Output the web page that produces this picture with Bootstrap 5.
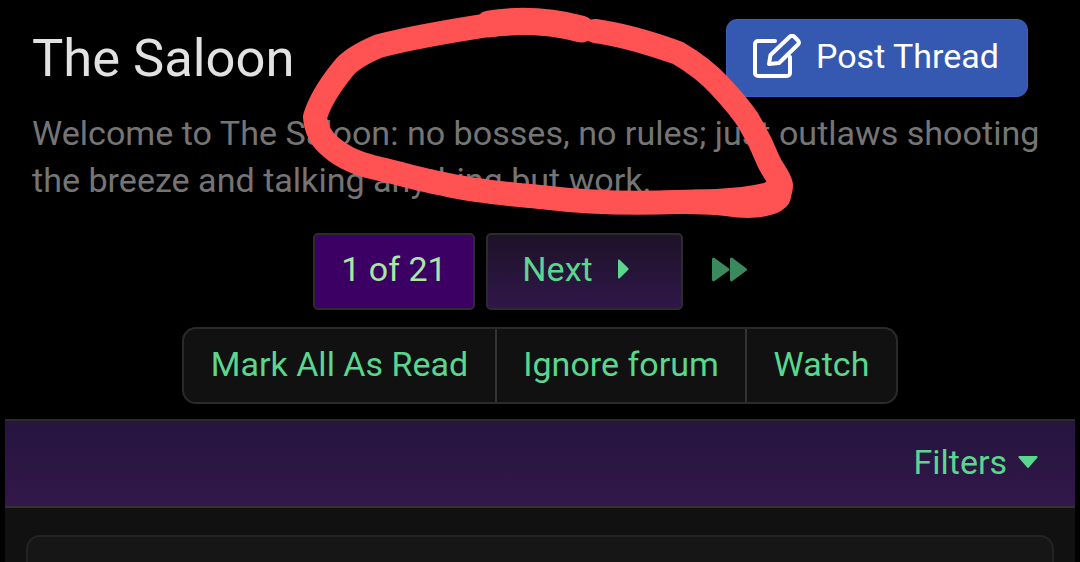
<!DOCTYPE html>
<html lang="en">
<head>
<meta charset="utf-8">
<title>The Saloon</title>
<link href="https://cdn.jsdelivr.net/npm/bootstrap@5.3.0/dist/css/bootstrap.min.css" rel="stylesheet">
<style>
html,body{height:562px;overflow:hidden}
body{background:#000;font-family:Roboto,"Liberation Sans",sans-serif;position:relative}
.top-area{padding:19px 52px 0 32px}
.forum-title{font-size:52.5px;font-weight:400;color:#e2e2e2;line-height:78px;margin:0}
.post-btn{width:302px;height:78px;background:#3558b0;border:1px solid #3a62c2;border-radius:11px;color:#fff;font-size:34px;padding:0 2px 3px 0;gap:15px}
.post-btn:hover{background:#3558b0;color:#fff}
.forum-desc{font-size:34.1px;line-height:47px;color:#757575;margin:13px 0 0;padding-left:32px;white-space:nowrap}
.pager-row{margin-top:29px;height:77px;padding-right:20px}
.page-box,.next-box{height:77px;border:2px solid #2c2c2c;border-radius:5px;font-size:34px;line-height:1;padding:0 0 5px}
.page-box{width:162px;background:#3c0064;color:#a9e8a3;margin-right:11px}
.next-box{width:197px;background:linear-gradient(#1e1228,#2f1749);color:#5ad68f;gap:24px;margin-right:29px;padding-right:18px}
.next-box:hover{color:#5ad68f}
.page-box:hover{color:#a9e8a3}
.pager-ff{margin-bottom:4px}
.action-row{margin-top:17px}
.action-group{height:77px;background:#111;border:2px solid #2a2a2a;border-radius:14px;overflow:hidden}
.action-item{font-size:34px;color:#5ad68f;padding:0;line-height:70px;border-right:2px solid #333;text-align:center}
.action-item:hover{color:#5ad68f}
.action-item:last-child{border-right:0}
.act-read{width:313px}
.act-ignore{width:250px}
.act-watch{width:149px}
.filter-bar{margin:15px 5px 0;height:89px;background:linear-gradient(#27143f,#311849);border-top:2px solid #2a2a2a;border-bottom:2px solid #333;padding:0 37px 2px 0;color:#5ad68f;font-size:34px;gap:11px}
.filter-caret{margin-bottom:2px}
.below-bar{margin:0 5px;height:54px;background:#111;padding:27px 21px 0;overflow:hidden}
.thread-panel{height:60px;background:#161616;border:2px solid #232323;border-radius:14px}
.scribble{position:absolute;left:0;top:0;pointer-events:none}
</style>
</head>
<body>
<div class="top-area d-flex justify-content-between align-items-start">
  <h1 class="forum-title">The Saloon</h1>
  <a href="#" class="btn post-btn d-flex align-items-center justify-content-center">
    <svg width="48" height="46" viewBox="0 0 48 46" fill="none" stroke="#fff" stroke-width="4" stroke-linejoin="round" stroke-linecap="round">
      <path d="M22 7H5a3 3 0 0 0-3 3v29a3 3 0 0 0 3 3h29a3 3 0 0 0 3-3V23"/>
      <path d="M16 30l1.500-9L37 2.500a3 3 0 0 1 4 0l4 4a3 3 0 0 1 0 4L26 29z"/>
    </svg>
    <span>Post Thread</span>
  </a>
</div>
<p class="forum-desc">Welcome to The Saloon: no bosses, no rules; just outlaws shooting<br>the breeze and talking anything but work.</p>
<div class="pager-row d-flex justify-content-center align-items-center">
  <a href="#" class="btn page-box d-flex align-items-center justify-content-center">1 of 21</a>
  <a href="#" class="btn next-box d-flex align-items-center justify-content-center">
    <span>Next</span>
    <svg width="12" height="20" viewBox="0 0 12 20" fill="#5ad68f"><path d="M1 1.500a1 1 0 0 1 1.700-.7l8.600 8.500a1 1 0 0 1 0 1.400l-8.600 8.500a1 1 0 0 1-1.700-.7z"/></svg>
  </a>
  <svg class="pager-ff" width="35" height="25" viewBox="0 0 35 25" fill="#3b8a5e"><path d="M0 2a1.500 1.500 0 0 1 2.500-1L17 11.500a1.300 1.300 0 0 1 0 2L2.500 24A1.500 1.500 0 0 1 0 23z"/><path d="M18 2a1.500 1.500 0 0 1 2.500-1L34.500 11.500a1.300 1.300 0 0 1 0 2L20.500 24A1.500 1.500 0 0 1 18 23z"/></svg>
</div>
<div class="action-row d-flex justify-content-center">
  <div class="action-group d-flex">
    <a href="#" class="action-item act-read text-decoration-none">Mark All As Read</a>
    <a href="#" class="action-item act-ignore text-decoration-none">Ignore forum</a>
    <a href="#" class="action-item act-watch text-decoration-none">Watch</a>
  </div>
</div>
<div class="filter-bar d-flex justify-content-end align-items-center">
  <span>Filters</span>
  <svg class="filter-caret" width="20" height="12" viewBox="0 0 20 12" fill="#5ad68f"><path d="M1.500 0h17a1 1 0 0 1 .8 1.700l-8.500 9.800a1 1 0 0 1-1.600 0L.7 1.700A1 1 0 0 1 1.500 0z"/></svg>
</div>
<div class="below-bar"><div class="thread-panel"></div></div>
<svg class="scribble" width="1080" height="562" viewBox="0 0 1080 562" fill="none" stroke="#ff5252" stroke-linecap="round" stroke-linejoin="round">
  <path stroke-width="24" d="M581 29C560 24 530 21 489 25C450 31 410 38 379 46C362 53 350 60 343 69C330 85 320 100 315 117C316 130 322 140 331 147C342 157 356 163 372 167C395 172 420 180 448 185C480 192 510 194 540 197C590 203 630 204 678 202C710 200 735 204 753 203C770 203 781 197 781 185C779 176 772 170 768 160C760 140 755 132 748 120C738 105 730 97 719 85C708 73 695 63 678 53C650 43 625 35 595 31"/>
  <path stroke-width="27" d="M489 24C520 19 550 21 581 29"/>
  <path fill="#ff5252" stroke="none" d="M660 191C700 189 735 190 764 183L782 172C795 190 795 205 777 213C760 219 745 219 725 216C705 214 685 214 660 214Z"/>
</svg>
</body>
</html>
